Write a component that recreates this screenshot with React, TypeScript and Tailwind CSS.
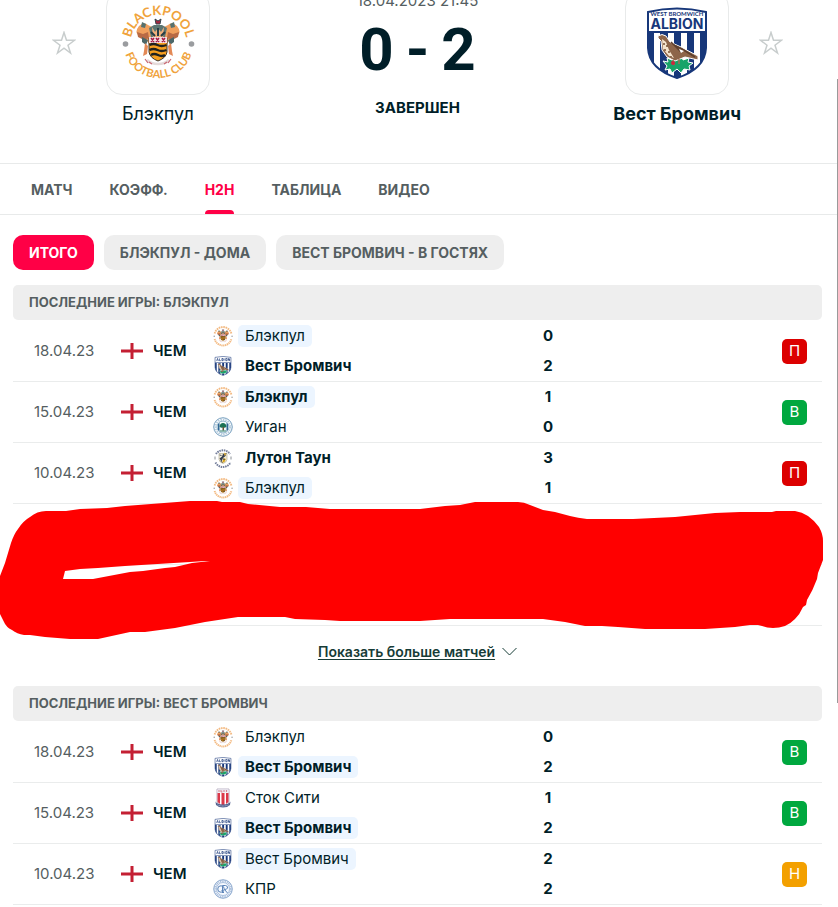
import { useId } from "react";
import type { ReactNode } from "react";

type Club = "blackpool" | "albion" | "wigan" | "luton" | "stoke" | "qpr";
type Outcome = "win" | "loss" | "draw";

interface Side {
  club: Club;
  name: string;
  goals: number;
  bold?: boolean;
  marked?: boolean;
}

interface Match {
  date: string;
  home: Side;
  away: Side;
  outcome: Outcome;
}

const blackpoolMatches: Match[] = [
  {
    date: "18.04.23",
    home: { club: "blackpool", name: "Блэкпул", goals: 0, marked: true },
    away: { club: "albion", name: "Вест Бромвич", goals: 2, bold: true },
    outcome: "loss",
  },
  {
    date: "15.04.23",
    home: { club: "blackpool", name: "Блэкпул", goals: 1, bold: true, marked: true },
    away: { club: "wigan", name: "Уиган", goals: 0 },
    outcome: "win",
  },
  {
    date: "10.04.23",
    home: { club: "luton", name: "Лутон Таун", goals: 3, bold: true },
    away: { club: "blackpool", name: "Блэкпул", goals: 1, marked: true },
    outcome: "loss",
  },
];

const albionMatches: Match[] = [
  {
    date: "18.04.23",
    home: { club: "blackpool", name: "Блэкпул", goals: 0 },
    away: { club: "albion", name: "Вест Бромвич", goals: 2, bold: true, marked: true },
    outcome: "win",
  },
  {
    date: "15.04.23",
    home: { club: "stoke", name: "Сток Сити", goals: 1 },
    away: { club: "albion", name: "Вест Бромвич", goals: 2, bold: true, marked: true },
    outcome: "win",
  },
  {
    date: "10.04.23",
    home: { club: "albion", name: "Вест Бромвич", goals: 2, marked: true },
    away: { club: "qpr", name: "КПР", goals: 2 },
    outcome: "draw",
  },
];

const outcomes: Record<Outcome, { letter: string; tone: string }> = {
  win: { letter: "В", tone: "bg-[#00a83f]" },
  loss: { letter: "П", tone: "bg-[#dc0000]" },
  draw: { letter: "Н", tone: "bg-[#f3a000]" },
};

function BlackpoolArms() {
  return (
    <g>
      <path d="M17 20q5-5 9-1l4 2 2 5-1 8-4 4-4-6-6-2q-5-4 0-10z" fill="#f0a05e" />
      <path d="M55 20q-5-5-9-1l-4 2-2 5 1 8 4 4 4-6 6-2q5-4 0-10z" fill="#f0a05e" />
      <path d="M20 16l4 2-1 4-4-1zM52 16l-4 2 1 4 4-1z" fill="#55716f" />
      <path d="M15 26l6 2 5-2 1 6-5 2-6-3zM57 26l-6 2-5-2-1 6 5 2 6-3z" fill="#b86a45" />
      <path d="M20 31l6 3-2 5-4-3zM52 31l-6 3 2 5 4-3z" fill="#4c6769" />
      <path d="M23 37l3 3-1 8-4 2 1-5zM49 37l-3 3 1 8 4 2-1-5z" fill="#e38956" />
      <path d="M27 22l5-3h8l5 3-2 9H29z" fill="#5c7672" />
      <path d="M30 21l3 5 3-4 3 4 3-5-1 11H31z" fill="#f1b07b" />
      <path d="M33 13l3 2 3-2-1 5h-4z" fill="#a7263e" stroke="#33464d" strokeWidth="1" />
      <path d="M36 22v8M29 26l4 4M43 26l-4 4" stroke="#273d45" strokeWidth="2" fill="none" />
      <path d="M27 32h18v14q-1 6-9 9-8-3-9-9z" fill="#f6a020" stroke="#3c332a" strokeWidth="1" />
      <path d="M27 31h18v6H27z" fill="#f4dfe3" />
      <path d="M29 32l3 4M32 32l-3 4M34 32l3 4M37 32l-3 4M40 32l3 4M43 32l-3 4" stroke="#a71a43" strokeWidth="1.400" />
      <path d="M27.500 39q4-2 8 0t9 0M27.500 44q4-2 8 0t9 0M29 49q3-2 7 0t7 0" stroke="#20221f" strokeWidth="2.300" fill="none" />
      <path d="M25 54q4 4 11 4t11-4" stroke="#e5dada" strokeWidth="2.500" fill="none" />
      <path d="M23 53l3 4M49 53l-3 4M27 56l3 2M45 56l-3 2" stroke="#c96672" strokeWidth="1.200" />
    </g>
  );
}

function BlackpoolCrest({ lettered = false }: { lettered?: boolean }) {
  const id = useId();
  return (
    <svg viewBox="0 0 72 74" className="h-full w-full overflow-visible" aria-hidden="true">
      <BlackpoolArms />
      <circle cx="3.500" cy="38" r="2.800" fill="#9a9c9f" />
      <circle cx="69.500" cy="38" r="2.800" fill="#9a9c9f" />
      {lettered ? (
        <g fill="#f0a33c" fontFamily="Lato, sans-serif">
          <path id={`${id}top`} d="M8.500 37a28 28 0 0 1 56 0" fill="none" />
          <path id={`${id}low`} d="M1.500 37a35 35 0 0 0 70 0" fill="none" />
          <text fontSize="13" fontWeight="700" textAnchor="middle">
            <textPath href={`#${id}top`} startOffset="50%">BLACKPOOL</textPath>
          </text>
          <text fontSize="11" fontWeight="700" textAnchor="middle">
            <textPath href={`#${id}low`} startOffset="50%">FOOTBALL CLUB</textPath>
          </text>
        </g>
      ) : (
        <g fill="none" stroke="#f3ba82" strokeWidth="7">
          <path d="M5 28a32 32 0 0 1 62 0" strokeDasharray="6 2.500" />
          <path d="M5 48a32 32 0 0 0 62 0" strokeDasharray="5 2" />
        </g>
      )}
    </svg>
  );
}

function AlbionCrest({ lettered = false }: { lettered?: boolean }) {
  const id = useId();
  const shield = "M2 5Q31-2 60 5V41Q59 62 31 71Q3 62 2 41Z";
  return (
    <svg viewBox="0 0 62 73" className="h-full w-full" aria-hidden="true">
      <clipPath id={id}>
        <path d={shield} />
      </clipPath>
      <path d={shield} fill="#fff" />
      <g clipPath={`url(#${id})`} fill="#17377a">
        <path d="M0 25h8v48H0zM14 25h8v48h-8zM28 25h7v48h-7zM41 25h7v48h-7zM54 25h8v48h-8zM0 24h62v2H0z" />
      </g>
      <path d="M17 54l5 1-1-4 5 2 3-4 3 3 4-3 1 4 6-2-1 4 5 1-4 3 1 4-6-1-3 4-4-4-5 4-2-4-5 1 2-4z" fill="#18a468" stroke="#fff" strokeWidth="1" />
      <path d="M12 29q4-3 8 0l4 6 11 5 17 9v4l-13-3-10 4-8-4-5-7-1-9-3-3z" fill="#8d6549" stroke="#fff" strokeWidth="1" />
      <path d="M16 32l4 3 3 8 5 8-5-2-6-7z" fill="#f5e4cd" />
      <path d="M18 36v2M21 38v2M19 42v2M23 44v2M25 49v1" stroke="#745033" strokeWidth="1.500" />
      <path d="M28 38l8 4 13 8M25 35l10 10" stroke="#5e402d" strokeWidth="1.500" fill="none" />
      <path d="M27 53l1 5M33 52v5" stroke="#a86d54" strokeWidth="1.500" />
      <path d="M33 42l5 2-3 2z" fill="#fff" />
      <circle cx="27" cy="56" r="2" fill="#ce263d" />
      <path d={shield} fill="none" stroke="#17377a" strokeWidth="2" />
      {lettered ? (
        <g fill="#17377a" textAnchor="middle" fontWeight="700">
          <text x="31" y="9" fontSize="6" fontFamily="Lato, sans-serif">WEST BROMWICH</text>
          <text x="31" y="22" fontSize="14" fontFamily="Inter, sans-serif">ALBION</text>
        </g>
      ) : (
        <path d="M8 18l3-9 3 9M18 9v8h5M27 9v8h4V9zM35 9v8M41 9h5v8h-5zM51 17V9l4 8V9" stroke="#17377a" strokeWidth="2.500" fill="none" />
      )}
    </svg>
  );
}

function WiganCrest() {
  return (
    <svg viewBox="0 0 40 40" className="h-full w-full" aria-hidden="true">
      <circle cx="20" cy="20" r="18.500" fill="#fff" stroke="#6f9abb" strokeWidth="2" />
      <circle cx="20" cy="20" r="15" fill="none" stroke="#b4cbdd" strokeWidth="3.500" strokeDasharray="3 2" />
      <circle cx="20" cy="20" r="12" fill="#f3fafb" stroke="#427ca1" strokeWidth="1.200" />
      <path d="M10 14l3-2v16l-3-2zM30 14l-3-2v16l3-2z" fill="#2f6594" />
      <path d="M13 19q1-7 7-7t7 7q-3 4-7 2-4 2-7-2z" fill="#1c7254" />
      <path d="M19 20h3v7h-3z" fill="#695132" />
      <path d="M14 28h12" stroke="#2a7c69" strokeWidth="2" />
    </svg>
  );
}

function LutonCrest() {
  return (
    <svg viewBox="0 0 40 40" className="h-full w-full" aria-hidden="true">
      <g fill="none" stroke="#737d9a" strokeWidth="4">
        <path d="M6 12a17 17 0 0 1 28 0" strokeDasharray="3 1.500" />
        <path d="M5 29a17 17 0 0 0 30 0" strokeDasharray="3 1.500" />
      </g>
      <path d="M12 11h16v12q-1 6-8 8-7-2-8-8z" fill="#f2edda" stroke="#989072" strokeWidth="1" />
      <path d="M13 21l5-4 2-5 7-2-2 6-5 4-3 7z" fill="#343d4d" />
      <path d="M21 20l5 2-3 6-5 2z" fill="#d8a51e" />
      <path d="M22 9l5 3-4 4z" fill="#e6b642" />
      <path d="M13 14l4 1M15 26l4 3M20 22l4 1" stroke="#4b515b" strokeWidth="2" />
      <path d="M4 17v6M36 17v6" stroke="#8b9096" strokeWidth="2" />
    </svg>
  );
}

function StokeCrest() {
  return (
    <svg viewBox="0 0 40 40" className="h-full w-full" aria-hidden="true">
      <path d="M8 2h24v25q-1 8-12 10Q9 34 8 27z" fill="#fff" stroke="#a79cb4" strokeWidth="1.500" />
      <path d="M9 10h5v22l-5-4zM17 10h6v25h-6zM26 10h5v18l-5 4z" fill="#dc3849" />
      <path d="M9 3h22v6H9z" fill="#e9e5ef" />
      <path d="M12 4v4M16 4v4h3M22 4v4M27 4v4" stroke="#d76673" strokeWidth="1.500" fill="none" />
      <path d="M5 27q3 6 15 6t15-6l-1 7q-5 5-14 5T6 34z" fill="#52618f" />
      <path d="M9 34q11 4 22 0" stroke="#fff" strokeWidth="1" strokeDasharray="2 1" fill="none" />
    </svg>
  );
}

function QprCrest() {
  return (
    <svg viewBox="0 0 40 40" className="h-full w-full" aria-hidden="true">
      <g fill="none" stroke="#5c84b8">
        <circle cx="20" cy="20" r="18.500" fill="#f7faff" strokeWidth="1.500" />
        <circle cx="20" cy="20" r="15.500" strokeWidth="3" strokeDasharray="2 1.500" opacity=".5" />
        <circle cx="20" cy="20" r="13" strokeWidth="1" />
        <circle cx="16" cy="20" r="6.500" strokeWidth="2" />
        <path d="M19 28V13h6q5 1 4 5-1 3-6 3l6 7M17 23l5 5" strokeWidth="2" />
      </g>
    </svg>
  );
}

function SmallCrest({ club }: { club: Club }) {
  const art: Record<Club, ReactNode> = {
    blackpool: <BlackpoolCrest />,
    albion: <AlbionCrest />,
    wigan: <WiganCrest />,
    luton: <LutonCrest />,
    stoke: <StokeCrest />,
    qpr: <QprCrest />,
  };
  return <span className="block size-5 shrink-0">{art[club]}</span>;
}

function FavouriteButton({ label }: { label: string }) {
  return (
    <button type="button" aria-label={label} className="size-6">
      <svg viewBox="0 0 24 24" className="size-6" fill="none" stroke="#c8cdcd" strokeWidth="1.500" aria-hidden="true">
        <path d="M12 1.500l2.500 7.800h8l-6.500 4.900 2.500 7.800-6.500-4.800-6.500 4.800L8 14.200 1.500 9.300h8z" />
      </svg>
    </button>
  );
}

function CrestCard({ children }: { children: ReactNode }) {
  return (
    <div className="flex size-[104px] items-center justify-center rounded-2xl border border-[#e8eaea] bg-white">
      {children}
    </div>
  );
}

function ScoreHeader() {
  return (
    <header className="-mt-[9px] grid h-[172px] grid-cols-3 pr-[31px] pl-7">
      <div className="grid grid-cols-[1fr_104px_1fr] content-start">
        <div className="flex items-center justify-center pr-1.5">
          <FavouriteButton label="Добавить Блэкпул в избранное" />
        </div>
        <CrestCard>
          <div className="h-[74px] w-[72px]">
            <BlackpoolCrest lettered />
          </div>
        </CrestCard>
        <a href="#blackpool" className="col-span-3 mt-[5px] text-center text-[18px] leading-7">
          Блэкпул
        </a>
      </div>
      <div className="flex flex-col items-center">
        <time className="text-[15px] leading-5 text-[#555e61]">18.04.2023 21:45</time>
        <div className="mt-1 flex gap-3 font-[Roboto] text-[60px] leading-[70px] font-bold">
          <span>0</span>
          <span>-</span>
          <span>2</span>
        </div>
        <p className="mt-[11px] text-[15px] leading-6 font-bold">ЗАВЕРШЕН</p>
      </div>
      <div className="grid grid-cols-[1fr_104px_1fr] content-start">
        <div className="col-start-2">
          <CrestCard>
            <div className="h-[73px] w-[62px]">
              <AlbionCrest lettered />
            </div>
          </CrestCard>
        </div>
        <div className="flex items-center justify-center pl-1.5">
          <FavouriteButton label="Добавить Вест Бромвич в избранное" />
        </div>
        <a href="#albion" className="col-span-3 mt-[5px] text-center text-[18px] leading-7 font-bold">
          Вест Бромвич
        </a>
      </div>
    </header>
  );
}

function Tabs() {
  const tabs = ["МАТЧ", "КОЭФФ.", "H2H", "ТАБЛИЦА", "ВИДЕО"];
  return (
    <nav className="flex h-[52px] gap-[37px] border-y border-[#e8eaea] pl-[31px] text-[14px] font-bold text-[#555e61]">
      {tabs.map((tab) =>
        tab === "H2H" ? (
          <a key={tab} href="#h2h" aria-current="page" className="flex flex-col text-[#ff0046]">
            <span className="flex flex-1 items-center pt-1">{tab}</span>
            <span className="h-1 rounded-t-sm bg-[#ff0046]" />
          </a>
        ) : (
          <a key={tab} href="#tab" className="flex items-center">
            {tab}
          </a>
        ),
      )}
    </nav>
  );
}

function Filters() {
  const base = "h-[35px] rounded-[10px] px-4 text-[14px] font-bold";
  return (
    <div className="mt-5 flex gap-2.5">
      <button type="button" aria-pressed="true" className={`${base} bg-[#ff0046] text-white`}>
        ИТОГО
      </button>
      <button type="button" className={`${base} bg-[#eeeeee] text-[#555e61]`}>
        БЛЭКПУЛ - ДОМА
      </button>
      <button type="button" className={`${base} bg-[#eeeeee] text-[#555e61]`}>
        ВЕСТ БРОМВИЧ - В ГОСТЯХ
      </button>
    </div>
  );
}

function TeamLine({ side }: { side: Side }) {
  return (
    <div className="flex h-[30px] items-center gap-[5px]">
      <SmallCrest club={side.club} />
      <span
        className={`rounded-[5px] px-[7px] leading-[22px] ${side.bold ? "font-bold" : ""} ${side.marked ? "bg-[#ecf5ff]" : ""}`}
      >
        {side.name}
      </span>
    </div>
  );
}

function MatchRow({ match }: { match: Match }) {
  const { letter, tone } = outcomes[match.outcome];
  const cell = "border-b border-[#eaecec] p-0";
  return (
    <tr>
      <td className={`${cell} pl-[21px] text-[#555e61]`}>{match.date}</td>
      <td className={cell}>
        <span className="flex items-center gap-2.5 font-semibold">
          <svg viewBox="0 0 22 16" className="h-4 w-[22px]" aria-hidden="true">
            <path d="M0 6.500h9.500V0h3v6.500H22v3h-9.500V16h-3V9.500H0z" fill="#c41f33" />
          </svg>
          ЧЕМ
        </span>
      </td>
      <td className={cell}>
        <TeamLine side={match.home} />
        <TeamLine side={match.away} />
      </td>
      <td className={`${cell} text-center leading-[30px] font-bold`}>
        <div>{match.home.goals}</div>
        <div>{match.away.goals}</div>
      </td>
      <td className={`${cell} pr-[15px]`}>
        <span className={`ml-auto flex size-[25px] items-center justify-center rounded-[5px] text-white ${tone}`}>
          {letter}
        </span>
      </td>
    </tr>
  );
}

function MatchTable({ title, matches, covered = 0 }: { title: string; matches: Match[]; covered?: number }) {
  const id = useId();
  return (
    <>
      <h2 id={id} className="rounded-[5px] bg-[#eeeeee] px-4 text-[13px] leading-[35px] font-bold text-[#555e61]">
        {title}
      </h2>
      <table aria-labelledby={id} className="mt-px w-full table-fixed border-separate border-spacing-0 text-[15px]">
        <colgroup>
          <col className="w-[108px]" />
          <col className="w-[92px]" />
          <col />
          <col className="w-12" />
          <col className="w-[250px]" />
        </colgroup>
        <tbody>
          {matches.map((match) => (
            <MatchRow key={match.date} match={match} />
          ))}
          {Array.from({ length: covered }, (_, i) => (
            <tr key={i}>
              <td colSpan={5} className="h-[61px] border-b border-[#eaecec] p-0" />
            </tr>
          ))}
        </tbody>
      </table>
    </>
  );
}

function MarkerScribble() {
  return (
    <svg
      viewBox="0 500 838 140"
      className="pointer-events-none absolute top-[215px] -left-[13px] h-[140px] w-[838px] max-w-none"
      aria-hidden="true"
    >
      <path
        fill="#ff0000"
        fillRule="evenodd"
        d="M0 576L5 563L11 543Q14 534 18 529Q23 521 30 517Q37 511 46 511H66L80 509L107 508L125 506L190 501H217L222 502H240L248 504L280 507H306L330 509H420L445 506L460 505L475 502H518Q524 502 530 505L543 510L555 512L570 516Q578 518 587 519H633L675 517L715 513L740 512H772L776 511H795Q802 512 808 516Q815 521 819 527Q823 534 823 541V560L818 573L817 579Q813 590 807 600L806 605L803 607Q800 614 795 619Q790 624 785 626Q779 628 773 628Q767 628 762 626L758 625H750L735 627L705 629H645L618 627L602 626H585L565 622L543 619H450L420 621H340L325 620L295 619L285 617H238L205 622L175 628L145 632H130L98 639H70L45 637L30 635H24Q17 634 12 630Q6 627 4 622L0 614ZM65 571L63 579H93L130 572L143 571L165 568L175 567L192 563L210 561H205L190 562L125 566L98 568L80 569Z"
      />
    </svg>
  );
}

export default function App() {
  return (
    <div className="relative min-h-screen overflow-hidden bg-white font-[Inter,'Noto_Sans',sans-serif] text-[#001e28]">
      <ScoreHeader />
      <Tabs />
      <main className="pr-4 pl-[13px]">
        <Filters />
        <section className="relative mt-[15px]">
          <MatchTable title="ПОСЛЕДНИЕ ИГРЫ: БЛЭКПУЛ" matches={blackpoolMatches} covered={2} />
          <div className="mb-2.5 flex h-[50px] items-center justify-center">
            <button type="button" className="flex items-center gap-[7px] text-[14px] font-semibold text-[#173c37]">
              <span className="underline underline-offset-2">Показать больше матчей</span>
              <svg viewBox="0 0 15 9" className="h-[9px] w-[15px]" fill="none" stroke="currentColor" aria-hidden="true">
                <path d="M.5 1l7 7 7-7" />
              </svg>
            </button>
          </div>
          <MarkerScribble />
        </section>
        <section>
          <MatchTable title="ПОСЛЕДНИЕ ИГРЫ: ВЕСТ БРОМВИЧ" matches={albionMatches} />
        </section>
      </main>
      <div className="absolute top-[79px] right-0 h-[624px] w-px bg-[#9a9a9a]" />
    </div>
  );
}
